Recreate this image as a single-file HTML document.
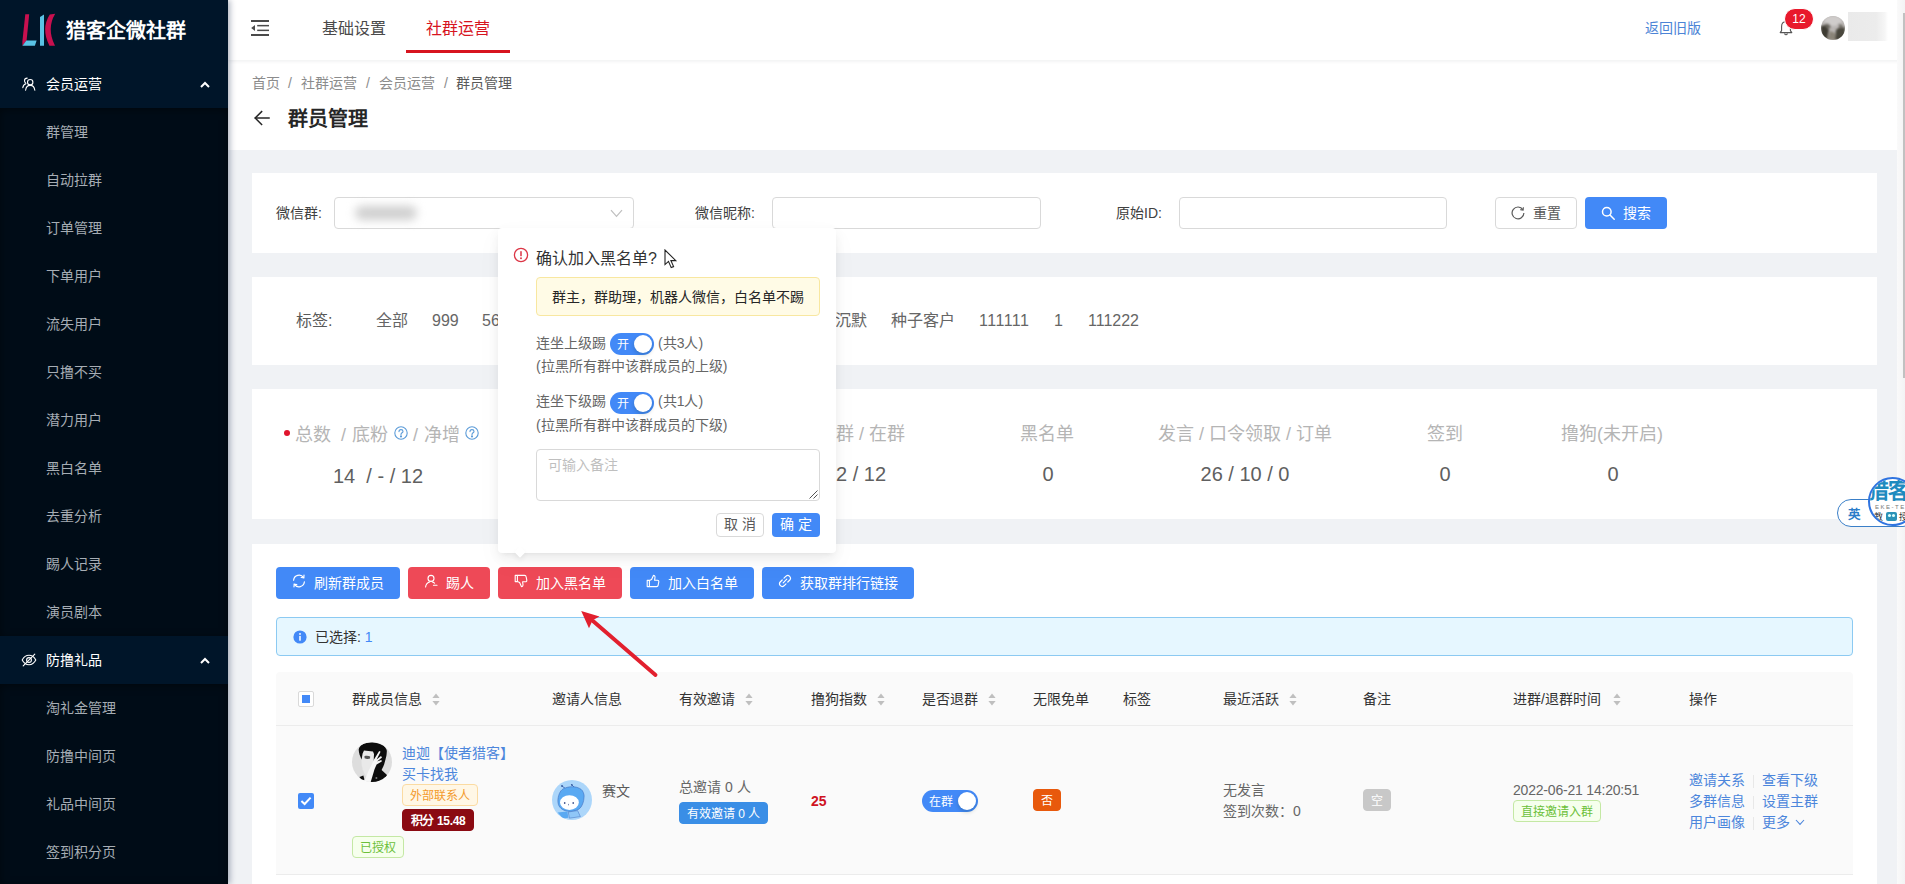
<!DOCTYPE html>
<html lang="zh-CN">
<head>
<meta charset="utf-8">
<title>群员管理</title>
<style>
*{box-sizing:border-box;margin:0;padding:0}
html,body{width:1905px;height:884px;overflow:hidden;background:#f0f2f5}
body{font-family:"Liberation Sans",sans-serif;font-size:14px;color:#595959;position:relative}
.a{position:absolute;white-space:nowrap}
.t{position:absolute;white-space:nowrap;height:22px;line-height:22px}
/* sidebar */
#side{left:0;top:0;width:228px;height:884px;background:#001529;box-shadow:2px 0 6px rgba(0,21,60,.32);z-index:5}
#side .sub{position:absolute;left:0;width:228px;background:#000c17;box-shadow:inset 0 2px 8px rgba(0,0,0,.45)}
#side .mi{position:absolute;left:46px;height:22px;line-height:22px;font-size:14px;color:#a6adb4;white-space:nowrap}
#side .mh{position:absolute;left:46px;height:22px;line-height:22px;font-size:14px;color:#fff;white-space:nowrap}
/* header */
#hdr{left:228px;top:0;width:1677px;height:60px;background:#fff;box-shadow:0 1px 4px rgba(0,21,41,.08);z-index:3}
#phdr{left:228px;top:60px;width:1677px;height:90px;background:#fff}
.card{position:absolute;left:252px;width:1625px;background:#fff}

.inp{position:absolute;top:197px;height:32px;border:1px solid #d9d9d9;border-radius:4px;background:#fff}
.btn{position:absolute;height:32px;border-radius:4px;color:#fff;font-size:14px;line-height:30px;white-space:nowrap;border:1px solid transparent}
.btn svg{position:absolute}
.btn span{position:absolute;top:0}
.tg{position:absolute;top:310px;height:22px;line-height:22px;font-size:16px;color:#666;white-space:nowrap}
.sl{position:absolute;top:421px;height:26px;line-height:26px;font-size:18px;color:#b5b5b5;white-space:nowrap;transform:translateX(-50%)}
.sv{position:absolute;top:460px;height:28px;line-height:28px;font-size:20px;color:#606060;white-space:nowrap;transform:translateX(-50%)}

.th{position:absolute;top:688px;height:22px;line-height:22px;font-size:14px;color:#333;white-space:nowrap}
.so{position:absolute;top:693px}
.tag{position:absolute;height:22px;line-height:22px;font-size:12px;padding:0 7px;border:1px solid;border-radius:4px;white-space:nowrap}
.lk{position:absolute;height:21px;line-height:21px;font-size:14px;color:#4c86dc;white-space:nowrap}
.dv{position:absolute;width:1px;height:13px;background:#e8e8e8}
</style>
</head>
<body>
<!-- ========== SIDEBAR ========== -->
<div id="side" class="a">
  <svg class="a" style="left:20px;top:12px" width="40" height="36" viewBox="0 0 40 36">
    <polygon points="5.3,2.3 9.2,2.3 6.6,28.6 2.4,33.7 2.4,29.2" fill="#c8104f"/>
    <polygon points="6.4,28.4 16.6,28.4 14.9,33.7 2.4,33.7" fill="#5ac3e6"/>
    <polygon points="20,5 24,2.6 24,33.7 20,33.7" fill="#5ac3e6"/>
    <path d="M29.8,2.6 L35.2,1.8 Q26.3,16.8 35,33.7 L29.4,33.7 Q20.7,16.8 29.8,2.6 Z" fill="#c8104f"/>
  </svg>
  <div class="a" style="left:66px;top:17px;height:28px;line-height:28px;font-size:20px;font-weight:bold;color:#fff">猎客企微社群</div>
  <div class="mh" style="top:73px">会员运营</div>
  <div class="sub" style="top:108px;height:528px"></div>
  <div class="mi" style="top:121px">群管理</div>
  <div class="mi" style="top:169px">自动拉群</div>
  <div class="mi" style="top:217px">订单管理</div>
  <div class="mi" style="top:265px">下单用户</div>
  <div class="mi" style="top:313px">流失用户</div>
  <div class="mi" style="top:361px">只撸不买</div>
  <div class="mi" style="top:409px">潜力用户</div>
  <div class="mi" style="top:457px">黑白名单</div>
  <div class="mi" style="top:505px">去重分析</div>
  <div class="mi" style="top:553px">踢人记录</div>
  <div class="mi" style="top:601px">演员剧本</div>
  <div class="mh" style="top:649px">防撸礼品</div>
  <div class="sub" style="top:684px;height:200px"></div>
  <div class="mi" style="top:697px">淘礼金管理</div>
  <div class="mi" style="top:745px">防撸中间页</div>
  <div class="mi" style="top:793px">礼品中间页</div>
  <div class="mi" style="top:841px">签到积分页</div>
  <svg class="a" style="left:22px;top:77px" width="14" height="14" viewBox="0 0 14 14" fill="none" stroke="#fff" stroke-width="1.1" stroke-linecap="round">
    <circle cx="8.2" cy="5.2" r="2.7"/><path d="M3.6,13.2 C4,10 5.8,8.4 8.2,8.4 C10.6,8.4 12.4,10 12.8,13.2"/>
    <path d="M5.2,1.1 C3.6,1.1 2.5,2.3 2.5,3.8 C2.5,4.8 3,5.6 3.7,6.1"/><path d="M0.8,10.6 C1.1,8.6 2.2,7.2 3.9,6.7"/>
  </svg>
  <svg class="a" style="left:200px;top:81px" width="10" height="7" viewBox="0 0 10 7" fill="none" stroke="#fff" stroke-width="2"><path d="M1,6 L5,2 L9,6"/></svg>
  <svg class="a" style="left:21px;top:653px" width="16" height="14" viewBox="0 0 16 14" fill="none" stroke="#fff" stroke-width="1.1" stroke-linecap="round">
    <path d="M1.2,7 C3,3.6 5.3,2.3 8,2.3 C10.7,2.3 13,3.6 14.8,7 C13,10.4 10.7,11.7 8,11.7 C5.3,11.7 3,10.4 1.2,7 Z"/><circle cx="8" cy="7" r="2.4"/><path d="M2.2,12.9 L13.8,1.1"/>
  </svg>
  <svg class="a" style="left:200px;top:657px" width="10" height="7" viewBox="0 0 10 7" fill="none" stroke="#fff" stroke-width="2"><path d="M1,6 L5,2 L9,6"/></svg>
</div>
<!-- ========== TOP HEADER ========== -->
<div id="hdr" class="a">
  <div class="t" style="left:94px;top:18px;font-size:16px;color:#4a4a4a">基础设置</div>
  <div class="t" style="left:198px;top:18px;font-size:16px;color:#d7141f">社群运营</div>
  <div class="a" style="left:178px;top:50px;width:104px;height:3px;background:#d7141f"></div>
  <div class="t" style="left:1417px;top:17px;color:#4c84d6">返回旧版</div>
  <svg class="a" style="left:23px;top:20px" width="18" height="16" viewBox="0 0 18 16" fill="#4a4a4a">
    <rect x="0" y="0" width="18" height="2"/><rect x="6.2" y="4.9" width="11.8" height="1.5"/><rect x="6.2" y="9.6" width="11.8" height="1.5"/><rect x="0" y="14" width="18" height="2"/>
    <polygon points="0.2,8 4,5.1 4,10.9"/>
  </svg>
  <svg class="a" style="left:1551px;top:20px" width="14" height="16" viewBox="0 0 14 16" fill="none" stroke="#555" stroke-width="1.1" stroke-linejoin="round">
    <path d="M1.2,12.6 L12.8,12.6 L11.4,10.6 L11.4,6.4 C11.4,3.6 9.6,1.8 7,1.8 C4.4,1.8 2.6,3.6 2.6,6.4 L2.6,10.6 Z"/><path d="M5.6,13.4 C5.8,14.4 6.3,14.8 7,14.8 C7.7,14.8 8.2,14.4 8.4,13.4"/>
  </svg>
  <div class="a" style="left:1556px;top:8px;width:30px;height:22px;border-radius:11px;background:#e8192c;border:1px solid #fff;color:#fff;font-size:12px;line-height:20px;text-align:center">12</div>
  <svg class="a" style="left:1593px;top:16px" width="24" height="24" viewBox="0 0 24 24"><defs><clipPath id="cp0"><circle cx="12" cy="12" r="12"/></clipPath><filter id="bl0"><feGaussianBlur stdDeviation="1.1"/></filter></defs><g clip-path="url(#cp0)"><rect width="24" height="24" fill="#b9b5b3"/><g filter="url(#bl0)"><ellipse cx="12" cy="5" rx="9" ry="5" fill="#cfcccb"/><path d="M0,10 L5,9 L8,14 L6,24 L0,24 Z" fill="#3c3a33"/><path d="M6,24 L9,15 L14,17 L15,24 Z" fill="#8a8478"/><path d="M14,24 L15,14 L20,10 L24,12 L24,24 Z" fill="#4a463c"/><path d="M3,9 C6,6 9,8 10,11 L7,13 Z" fill="#6b675f"/><path d="M17,8 C20,7 22,9 22,12 L19,12 Z" fill="#77736c"/></g></g></svg>
  <div class="a" style="left:1620px;top:12px;width:40px;height:29px;background:linear-gradient(90deg,#eaeaea 0,#ececec 70%,#f6f6f6 92%,#fff 100%);filter:blur(.6px)"></div>
</div>
<!-- ========== PAGE HEADER ========== -->
<div id="phdr" class="a">
  <div class="t" style="left:24px;top:12px;color:#8c8c8c">首页</div>
  <div class="t" style="left:60px;top:12px;color:#8c8c8c">/</div>
  <div class="t" style="left:73px;top:12px;color:#8c8c8c">社群运营</div>
  <div class="t" style="left:138px;top:12px;color:#8c8c8c">/</div>
  <div class="t" style="left:151px;top:12px;color:#8c8c8c">会员运营</div>
  <div class="t" style="left:216px;top:12px;color:#8c8c8c">/</div>
  <div class="t" style="left:228px;top:12px;color:#595959">群员管理</div>
  <div class="a" style="left:60px;top:43px;height:32px;line-height:32px;font-size:20px;font-weight:bold;color:#262626">群员管理</div>
  <svg class="a" style="left:26px;top:50px" width="16" height="16" viewBox="0 0 16 16" fill="none" stroke="#262626" stroke-width="1.5" stroke-linecap="square"><path d="M1.4,8 L15,8"/><path d="M7.6,1.6 L1.2,8 L7.6,14.4" stroke-linejoin="miter"/></svg>
</div>
<!-- ========== CARDS ========== -->
<div class="card" id="c1" style="top:173px;height:80px"></div>
<div class="card" id="c2" style="top:277px;height:88px"></div>
<div class="card" id="c3" style="top:389px;height:130px"></div>
<div class="card" id="c4" style="top:544px;height:340px"></div>

<!-- filter card -->
<div class="t" style="left:276px;top:202px;color:#404040">微信群:</div>
<div class="inp" style="left:334px;width:300px">
  <div class="a" style="left:20px;top:8px;width:62px;height:14px;border-radius:7px;background:#cfcfcf;filter:blur(5px)"></div>
  <svg class="a" style="left:275px;top:11px" width="13" height="9" viewBox="0 0 13 9" fill="none" stroke="#bfbfbf" stroke-width="1.2"><path d="M1,1.2 L6.5,7.4 L12,1.2"/></svg>
</div>
<div class="t" style="left:695px;top:202px;color:#404040">微信昵称:</div>
<div class="inp" style="left:772px;width:269px"></div>
<div class="t" style="left:1116px;top:202px;color:#404040">原始ID:</div>
<div class="inp" style="left:1179px;width:268px"></div>
<div class="btn" style="left:1495px;top:197px;width:82px;background:#fff;border-color:#d9d9d9;color:#595959">
  <svg style="left:15px;top:8px" width="14" height="14" viewBox="0 0 14 14" fill="none" stroke="#595959" stroke-width="1.2"><path d="M11.9,3.6 A5.9,5.9 0 1 0 12.9,7"/><path d="M12.4,1.2 L12.1,4 L9.3,3.6" stroke-width="1.1"/></svg>
  <span style="left:37px">重置</span>
</div>
<div class="btn" style="left:1585px;top:197px;width:82px;background:#4289f7">
  <svg style="left:15px;top:8px" width="14" height="14" viewBox="0 0 14 14" fill="none" stroke="#fff" stroke-width="1.5"><circle cx="5.8" cy="5.8" r="4.3"/><path d="M9,9 L13.2,13.2" stroke-linecap="round"/></svg>
  <span style="left:37px">搜索</span>
</div>
<!-- tags card -->
<div class="tg" style="left:296px;color:#595959">标签:</div>
<div class="tg" style="left:376px">全部</div>
<div class="tg" style="left:432px">999</div>
<div class="tg" style="left:482px">56</div>
<div class="tg" style="left:835px">沉默</div>
<div class="tg" style="left:891px">种子客户</div>
<div class="tg" style="left:979px;letter-spacing:.5px">111111</div>
<div class="tg" style="left:1054px">1</div>
<div class="tg" style="left:1088px">111222</div>
<!-- stats card -->
<div class="a" style="left:284px;top:430px;width:6px;height:6px;border-radius:50%;background:#e0142d"></div>
<div class="a" style="left:295px;top:422px;height:26px;line-height:26px;font-size:18px;color:#b5b5b5">总数</div>
<div class="a" style="left:341px;top:422px;height:26px;line-height:26px;font-size:18px;color:#b5b5b5">/</div>
<div class="a" style="left:352px;top:422px;height:26px;line-height:26px;font-size:18px;color:#b5b5b5">底粉</div>
<div class="a" style="left:413px;top:422px;height:26px;line-height:26px;font-size:18px;color:#b5b5b5">/</div>
<div class="a" style="left:424px;top:422px;height:26px;line-height:26px;font-size:18px;color:#b5b5b5">净增</div>
<svg class="a" style="left:394px;top:426px" width="14" height="14" viewBox="0 0 14 14" fill="none" stroke="#5b9bd8" stroke-width="1.1"><circle cx="7" cy="7" r="6.2"/><path d="M5,5.6 C5,4.3 5.9,3.6 7,3.6 C8.1,3.6 9,4.3 9,5.4 C9,6.8 7,6.8 7,8.4" stroke-linecap="round"/><circle cx="7" cy="10.4" r=".5" fill="#5b9bd8"/></svg>
<svg class="a" style="left:465px;top:426px" width="14" height="14" viewBox="0 0 14 14" fill="none" stroke="#5b9bd8" stroke-width="1.1"><circle cx="7" cy="7" r="6.2"/><path d="M5,5.6 C5,4.3 5.9,3.6 7,3.6 C8.1,3.6 9,4.3 9,5.4 C9,6.8 7,6.8 7,8.4" stroke-linecap="round"/><circle cx="7" cy="10.4" r=".5" fill="#5b9bd8"/></svg>
<div class="sv" style="left:378px;top:462px">14&nbsp; / - / 12</div>
<div class="sl" style="left:836px;transform:none">群 / 在群</div>
<div class="sv" style="left:861px">2 / 12</div>
<div class="sl" style="left:1047px">黑名单</div>
<div class="sv" style="left:1048px">0</div>
<div class="sl" style="left:1245px">发言 / 口令领取 / 订单</div>
<div class="sv" style="left:1245px">26 / 10 / 0</div>
<div class="sl" style="left:1445px">签到</div>
<div class="sv" style="left:1445px">0</div>
<div class="sl" style="left:1612px">撸狗(未开启)</div>
<div class="sv" style="left:1613px">0</div>

<!-- action buttons -->
<div class="btn" style="left:276px;top:567px;width:124px;background:#4289f7">
  <svg style="left:15px;top:6px" width="14" height="14" viewBox="0 0 14 14" fill="none" stroke="#fff" stroke-width="1.2" stroke-linecap="round"><path d="M1.6,6.2 A5.5,5.5 0 0 1 11.6,3.6"/><path d="M12.4,7.8 A5.5,5.5 0 0 1 2.4,10.4"/><path d="M12,1.2 L11.8,3.9 L9.2,3.5"/><path d="M2,12.8 L2.2,10.1 L4.8,10.5"/></svg>
  <span style="left:37px">刷新群成员</span>
</div>
<div class="btn" style="left:408px;top:567px;width:82px;background:#ee4957">
  <svg style="left:15px;top:6px" width="14" height="14" viewBox="0 0 14 14" fill="none" stroke="#fff" stroke-width="1.1" stroke-linecap="round"><circle cx="7" cy="4.4" r="3"/><path d="M1.6,13 C1.8,10.2 3.4,8.6 5.6,7.9"/><path d="M9.4,11.2 L13,11.2"/><path d="M8.4,7.9 C9.3,8.2 10,8.6 10.6,9.2"/></svg>
  <span style="left:37px">踢人</span>
</div>
<div class="btn" style="left:498px;top:567px;width:124px;background:#ee4957">
  <svg style="left:15px;top:6px" width="14" height="14" viewBox="0 0 14 14" fill="none" stroke="#fff" stroke-width="1.1" stroke-linejoin="round"><path d="M3.4,1.4 L3.4,7.6 L1.2,7.6 L1.2,1.4 Z"/><path d="M3.4,1.4 L10.6,1.4 C11.6,1.4 12,2 12.1,2.7 L12.8,6.2 C12.9,7.2 12.3,7.8 11.4,7.8 L8.6,7.8 L9,10.6 C9.1,11.8 8.4,12.6 7.4,12.6 L5.6,8.6 L3.4,7.6"/></svg>
  <span style="left:37px">加入黑名单</span>
</div>
<div class="btn" style="left:630px;top:567px;width:124px;background:#4289f7">
  <svg style="left:15px;top:6px" width="14" height="14" viewBox="0 0 14 14" fill="none" stroke="#fff" stroke-width="1.1" stroke-linejoin="round"><path d="M3.4,12.6 L3.4,6.4 L1.2,6.4 L1.2,12.6 Z"/><path d="M3.4,12.6 L10.6,12.6 C11.6,12.6 12,12 12.1,11.3 L12.8,7.8 C12.9,6.8 12.3,6.2 11.4,6.2 L8.6,6.2 L9,3.4 C9.1,2.2 8.4,1.4 7.4,1.4 L5.6,5.4 L3.4,6.4"/></svg>
  <span style="left:37px">加入白名单</span>
</div>
<div class="btn" style="left:762px;top:567px;width:152px;background:#4289f7">
  <svg style="left:15px;top:6px" width="14" height="14" viewBox="0 0 14 14" fill="none" stroke="#fff" stroke-width="1.2" stroke-linecap="round"><path d="M6,4.2 L8,2.2 A2.7,2.7 0 0 1 11.8,6 L9.8,8"/><path d="M8,9.8 L6,11.8 A2.7,2.7 0 0 1 2.2,8 L4.2,6"/><path d="M5.2,8.8 L8.8,5.2"/></svg>
  <span style="left:37px">获取群排行链接</span>
</div>
<!-- alert -->
<div class="a" style="left:276px;top:617px;width:1577px;height:39px;background:#e6f7ff;border:1px solid #8ccaf2;border-radius:4px"></div>
<svg class="a" style="left:293px;top:630px" width="14" height="14" viewBox="0 0 14 14"><circle cx="7" cy="7" r="6.6" fill="#4289f7"/><rect x="6.25" y="5.9" width="1.5" height="4.8" fill="#fff"/><circle cx="7" cy="3.9" r=".95" fill="#fff"/></svg>
<div class="t" style="left:315px;top:626px;color:#333">已选择: <span style="color:#4289f7">1</span></div>
<!-- table header -->
<div class="a" style="left:276px;top:672px;width:1577px;height:54px;background:#fafafa;border-bottom:1px solid #ececec;border-radius:4px 4px 0 0"></div>
<div class="a" style="left:276px;top:726px;width:1577px;height:149px;background:#fafafa;border-bottom:1px solid #ececec"></div>
<div class="a" style="left:298px;top:691px;width:16px;height:16px;border:1px solid #d9d9d9;border-radius:2px;background:#fff"><div class="a" style="left:3px;top:3px;width:8px;height:8px;background:#4289f7"></div></div>
<div class="th" style="left:352px">群成员信息</div><svg class="so" style="left:432px" width="8" height="13" viewBox="0 0 8 13" fill="#bfbfbf"><polygon points="4,0.6 7.6,5 0.4,5"/><polygon points="4,12.4 7.6,8 0.4,8"/></svg>
<div class="th" style="left:552px">邀请人信息</div>
<div class="th" style="left:679px">有效邀请</div><svg class="so" style="left:745px" width="8" height="13" viewBox="0 0 8 13" fill="#bfbfbf"><polygon points="4,0.6 7.6,5 0.4,5"/><polygon points="4,12.4 7.6,8 0.4,8"/></svg>
<div class="th" style="left:811px">撸狗指数</div><svg class="so" style="left:877px" width="8" height="13" viewBox="0 0 8 13" fill="#bfbfbf"><polygon points="4,0.6 7.6,5 0.4,5"/><polygon points="4,12.4 7.6,8 0.4,8"/></svg>
<div class="th" style="left:922px">是否退群</div><svg class="so" style="left:988px" width="8" height="13" viewBox="0 0 8 13" fill="#bfbfbf"><polygon points="4,0.6 7.6,5 0.4,5"/><polygon points="4,12.4 7.6,8 0.4,8"/></svg>
<div class="th" style="left:1033px">无限免单</div>
<div class="th" style="left:1123px">标签</div>
<div class="th" style="left:1223px">最近活跃</div><svg class="so" style="left:1289px" width="8" height="13" viewBox="0 0 8 13" fill="#bfbfbf"><polygon points="4,0.6 7.6,5 0.4,5"/><polygon points="4,12.4 7.6,8 0.4,8"/></svg>
<div class="th" style="left:1363px">备注</div>
<div class="th" style="left:1513px">进群/退群时间</div><svg class="so" style="left:1613px" width="8" height="13" viewBox="0 0 8 13" fill="#bfbfbf"><polygon points="4,0.6 7.6,5 0.4,5"/><polygon points="4,12.4 7.6,8 0.4,8"/></svg>
<div class="th" style="left:1689px">操作</div>
<!-- row -->
<div class="a" style="left:298px;top:793px;width:16px;height:16px;border-radius:2px;background:#4289f7"><svg class="a" style="left:2px;top:3px" width="12" height="10" viewBox="0 0 12 10" fill="none" stroke="#fff" stroke-width="2"><path d="M1.4,5 L4.6,8 L10.6,1.6"/></svg></div>
<svg class="a" style="left:352px;top:742px" width="40" height="40" viewBox="0 0 40 40">
  <defs><clipPath id="cp1"><circle cx="20" cy="20" r="20"/></clipPath><filter id="bl1"><feGaussianBlur stdDeviation=".55"/></filter></defs>
  <g clip-path="url(#cp1)">
    <rect width="40" height="40" fill="#dddddd"/>
    <g filter="url(#bl1)">
    <path d="M11,8.5 L22,7.5 L22,30 L14,34 C9,28 8.5,18 11,8.5 Z" fill="#e9e9e9"/>
    <path d="M6.8,7 C7.5,3 13,0.2 20,0.4 C28,0.6 34,4 34.8,8.5 C35,13 33.6,17 32.8,20 C32,24 30,26.5 29.6,28 L35,33 L36,41 L15,41 L19,30 L21.5,22 L22,12 L21,9.5 L12,8.5 L10.6,11.5 L9.6,17.5 C8,14 6.4,10.5 6.8,7 Z" fill="#0e0e0e"/>
    <path d="M12.4,14.2 C14,13.4 16.6,13.6 18.2,14.6 L18,16.6 C16.4,17.4 13.8,17 12.6,16.2 Z" fill="#555"/>
    <path d="M7.4,35 L11.4,33.6 L12.4,37.6 L9.4,39.4 Z" fill="#111"/>
    <path d="M12,40 L16,30 L20,22 L21.4,18.6 L27.2,9 L28.6,9.8 L24.6,17.4 L29,14 L30,15.4 L25,19.6 L29.4,18 L29.8,19.6 L24.6,22.4 L22.6,27 L18.4,41 Z" fill="#f6f6f6"/>
    <circle cx="24.4" cy="36" r="1" fill="#777"/>
    </g>
  </g>
</svg>
<div class="lk" style="left:402px;top:743px">迪迦【使者猎客】</div>
<div class="lk" style="left:402px;top:764px">买卡找我</div>
<div class="tag" style="left:402px;top:784px;color:#f39a2c;background:#fff7e6;border-color:#fbdba2">外部联系人</div>
<div class="tag" style="left:402px;top:809px;color:#fff;background:#8b0a12;border-color:#8b0a12;width:72px;padding:0;text-align:center;font-weight:bold;letter-spacing:-.3px">积分 15.48</div>
<div class="tag" style="left:352px;top:836px;color:#6cbf3a;background:#f6ffed;border-color:#c4e8a4">已授权</div>
<svg class="a" style="left:552px;top:780px" width="40" height="40" viewBox="0 0 40 40">
  <defs><clipPath id="cp2"><circle cx="20" cy="20" r="20"/></clipPath><filter id="bl2"><feGaussianBlur stdDeviation=".4"/></filter></defs>
  <g clip-path="url(#cp2)">
    <rect width="40" height="40" fill="#acd6fa"/>
    <g filter="url(#bl2)">
    <path d="M10,6 L13.2,8.4 M19.8,4.8 L22,7" stroke="#3f6fc0" stroke-width="1" fill="none"/>
    <circle cx="10" cy="6" r=".9" fill="#35579a"/><circle cx="19.8" cy="4.8" r=".9" fill="#35579a"/>
    <path d="M5.9,20 C6.4,13.5 9,9.4 12.6,8.2 C16,6.8 19,6.6 22,6.8 C26,7.2 29,8.8 30.3,10.6 C31.8,13 32.4,15.5 32,17.6 C31.8,21.5 30.6,24.6 29,27 C27,30 23,31.4 18,31.4 C12,31.4 7.6,28.4 6.4,24.4 C6,23 5.8,21.4 5.9,20 Z" fill="#5aa9f2" stroke="#3f6fc0" stroke-width=".6"/>
    <ellipse cx="17.4" cy="22.6" rx="9.4" ry="7.4" fill="#fff"/>
    <ellipse cx="12.7" cy="22.9" rx=".8" ry="1" fill="#3b4f8a"/><ellipse cx="21.2" cy="22.9" rx=".8" ry="1" fill="#3b4f8a"/><ellipse cx="16.5" cy="24.6" rx=".5" ry=".9" fill="#7a86b0"/>
    <path d="M5.6,32.6 L15.4,31.6 L16.4,37.8 L11,38.4 Z" fill="#5aa9f2"/>
    <path d="M16.2,32 L25.6,30.6 L28.4,36.6 L17.4,38.2 Z" fill="#8fc6f7" stroke="#3f6fc0" stroke-width=".5"/>
    </g>
  </g>
</svg>
<div class="t" style="left:602px;top:780px;color:#595959">赛文</div>
<div class="t" style="left:679px;top:776px;color:#666">总邀请 0 人</div>
<div class="tag" style="left:679px;top:802px;color:#fff;background:#3a8ee6;border-color:#3a8ee6">有效邀请 0 人</div>
<div class="t" style="left:811px;top:790px;color:#cf1322;font-weight:bold">25</div>
<div class="a" style="left:922px;top:790px;width:56px;height:22px;border-radius:11px;background:#4289f7"><div class="a" style="left:7px;top:1px;height:22px;line-height:22px;font-size:12px;color:#fff">在群</div><div class="a" style="left:36px;top:2px;width:18px;height:18px;border-radius:50%;background:#fff;box-shadow:0 2px 4px rgba(0,35,11,.2)"></div></div>
<div class="tag" style="left:1033px;top:789px;color:#fff;background:#e8590c;border-color:#e8590c">否</div>
<div class="t" style="left:1223px;top:779px;color:#666">无发言</div>
<div class="t" style="left:1223px;top:800px;color:#666">签到次数：0</div>
<div class="tag" style="left:1363px;top:789px;color:#fff;background:#c8c8c8;border-color:#c8c8c8">空</div>
<div class="t" style="left:1513px;top:779px;color:#666;letter-spacing:-.2px">2022-06-21 14:20:51</div>
<div class="tag" style="left:1513px;top:800px;color:#6cbf3a;background:#f6ffed;border-color:#c4e8a4">直接邀请入群</div>
<div class="lk" style="left:1689px;top:770px">邀请关系</div><div class="dv" style="left:1753px;top:775px"></div><div class="lk" style="left:1762px;top:770px">查看下级</div>
<div class="lk" style="left:1689px;top:791px">多群信息</div><div class="dv" style="left:1753px;top:796px"></div><div class="lk" style="left:1762px;top:791px">设置主群</div>
<div class="lk" style="left:1689px;top:812px">用户画像</div><div class="dv" style="left:1753px;top:817px"></div><div class="lk" style="left:1762px;top:812px">更多</div>
<svg class="a" style="left:1795px;top:819px" width="10" height="7" viewBox="0 0 10 7" fill="none" stroke="#4c86dc" stroke-width="1.1"><path d="M1,1 L5,5.4 L9,1"/></svg>

<!-- popover -->
<div class="a" id="pop" style="left:498px;top:228px;width:338px;height:325px;background:#fff;border-radius:4px;box-shadow:0 3px 6px -4px rgba(0,0,0,.10),0 5px 12px rgba(0,0,0,.06),0 9px 24px 4px rgba(0,0,0,.025);z-index:10">
  <div class="a" style="left:17.5px;top:320px;width:8px;height:8px;background:#fff;transform:rotate(45deg);box-shadow:2px 2px 5px rgba(0,0,0,.06)"></div>
  <svg class="a" style="left:15px;top:19px" width="16" height="16" viewBox="0 0 16 16" fill="none"><circle cx="8" cy="8" r="6.6" stroke="#dc3545" stroke-width="1.3"/><rect x="7.25" y="4.2" width="1.5" height="5" fill="#dc3545"/><circle cx="8" cy="11.2" r=".95" fill="#dc3545"/></svg>
  <div class="a" style="left:38px;top:19px;height:24px;line-height:24px;font-size:16px;color:#333">确认加入黑名单?</div>
  <div class="a" style="left:38px;top:49px;width:284px;height:39px;background:#fffbe6;border:1px solid #f8e7a0;border-radius:4px"></div>
  <div class="t" style="left:54px;top:58px;color:#262626">群主，群助理，机器人微信，白名单不踢</div>
  <div class="t" style="left:38px;top:104px;color:#666">连坐上级踢</div>
  <div class="a" style="left:112px;top:105px;width:44px;height:22px;border-radius:11px;background:#4289f7"><div class="a" style="left:7px;top:1px;height:22px;line-height:22px;font-size:12px;color:#fff">开</div><div class="a" style="left:24px;top:2px;width:18px;height:18px;border-radius:50%;background:#fff;box-shadow:0 2px 4px rgba(0,35,11,.2)"></div></div>
  <div class="t" style="left:160px;top:104px;color:#666">(共3人)</div>
  <div class="t" style="left:38px;top:127px;color:#666">(拉黑所有群中该群成员的上级)</div>
  <div class="t" style="left:38px;top:162px;color:#666">连坐下级踢</div>
  <div class="a" style="left:112px;top:164px;width:44px;height:22px;border-radius:11px;background:#4289f7"><div class="a" style="left:7px;top:1px;height:22px;line-height:22px;font-size:12px;color:#fff">开</div><div class="a" style="left:24px;top:2px;width:18px;height:18px;border-radius:50%;background:#fff;box-shadow:0 2px 4px rgba(0,35,11,.2)"></div></div>
  <div class="t" style="left:160px;top:162px;color:#666">(共1人)</div>
  <div class="t" style="left:38px;top:186px;color:#666">(拉黑所有群中该群成员的下级)</div>
  <div class="a" style="left:38px;top:221px;width:284px;height:52px;border:1px solid #d9d9d9;border-radius:4px;background:#fff"></div>
  <div class="t" style="left:50px;top:226px;color:#bfbfbf">可输入备注</div>
  <svg class="a" style="left:311px;top:262px" width="9" height="9" viewBox="0 0 9 9" stroke="#555" stroke-width="1"><path d="M0.5,8.5 L8.5,0.5 M4.5,8.5 L8.5,4.5"/></svg>
  <div class="a" style="left:218px;top:285px;width:48px;height:24px;border:1px solid #d9d9d9;border-radius:4px;background:#fff;color:#595959;line-height:20px;text-align:center;font-size:14px">取 消</div>
  <div class="a" style="left:274px;top:285px;width:48px;height:24px;border-radius:4px;background:#4289f7;color:#fff;line-height:22px;text-align:center;font-size:14px">确 定</div>
</div>
<!-- mouse cursor -->
<svg class="a" style="left:664px;top:249px;z-index:12" width="14" height="20" viewBox="0 0 14 20"><path d="M1,1 L1,15.6 L4.5,12.4 L7.2,18.6 L9.6,17.6 L6.9,11.6 L11.8,11.6 Z" fill="#fff" stroke="#222" stroke-width="1.1" stroke-linejoin="miter"/></svg>
<!-- red annotation arrow -->
<svg class="a" style="left:570px;top:600px;z-index:11" width="100" height="90" viewBox="570 600 100 90"><path d="M655.5,675 L593,621" stroke="#e2202e" stroke-width="3.9" stroke-linecap="round" fill="none"/><polygon points="581.2,611.1 599.5,616.6 592.6,620.2 589,628.2" fill="#e2202e"/></svg>

<!-- floating widget -->
<div class="a" style="left:1837px;top:499px;width:80px;height:28px;border:1px solid #3a7fc8;border-radius:14px;background:#fff;z-index:26"></div>
<div class="a" style="left:1848px;top:505px;height:20px;line-height:20px;font-size:12.5px;font-weight:bold;color:#2b7cc9;z-index:27">英</div>
<div class="a" style="left:1868px;top:477px;width:49px;height:49px;border:2px solid #2f74e0;border-radius:50%;background:#fff;overflow:hidden;z-index:28">
  <div class="a" style="left:-3px;top:0px;height:24px;line-height:24px;font-size:22px;font-weight:bold;color:#1f8bbf;letter-spacing:-1px">猎客</div>
  <div class="a" style="left:5px;top:24px;height:8px;line-height:8px;font-size:6px;color:#777;letter-spacing:1.5px">EKE-TECH</div>
  <div class="a" style="left:4px;top:33px;height:10px;line-height:10px;font-size:9px;color:#333">教</div>
  <div class="a" style="left:16px;top:33px;width:11px;height:9px;border-radius:2px;background:#2a93b8"></div>
  <div class="a" style="left:18px;top:35px;width:3px;height:3px;border-radius:50%;background:#dff"></div>
  <div class="a" style="left:22px;top:35px;width:3px;height:3px;border-radius:50%;background:#dff"></div>
  <div class="a" style="left:29px;top:33px;height:10px;line-height:10px;font-size:9px;color:#333">授</div>
</div>
<!-- scrollbar -->
<div class="a" style="left:1897px;top:0;width:8px;height:884px;background:linear-gradient(90deg,#fafafa,#f3f3f4);z-index:20"></div>
<div class="a" style="left:1903px;top:13px;width:2px;height:365px;background:#c1c1c1;z-index:21"></div>




</body>
</html>
